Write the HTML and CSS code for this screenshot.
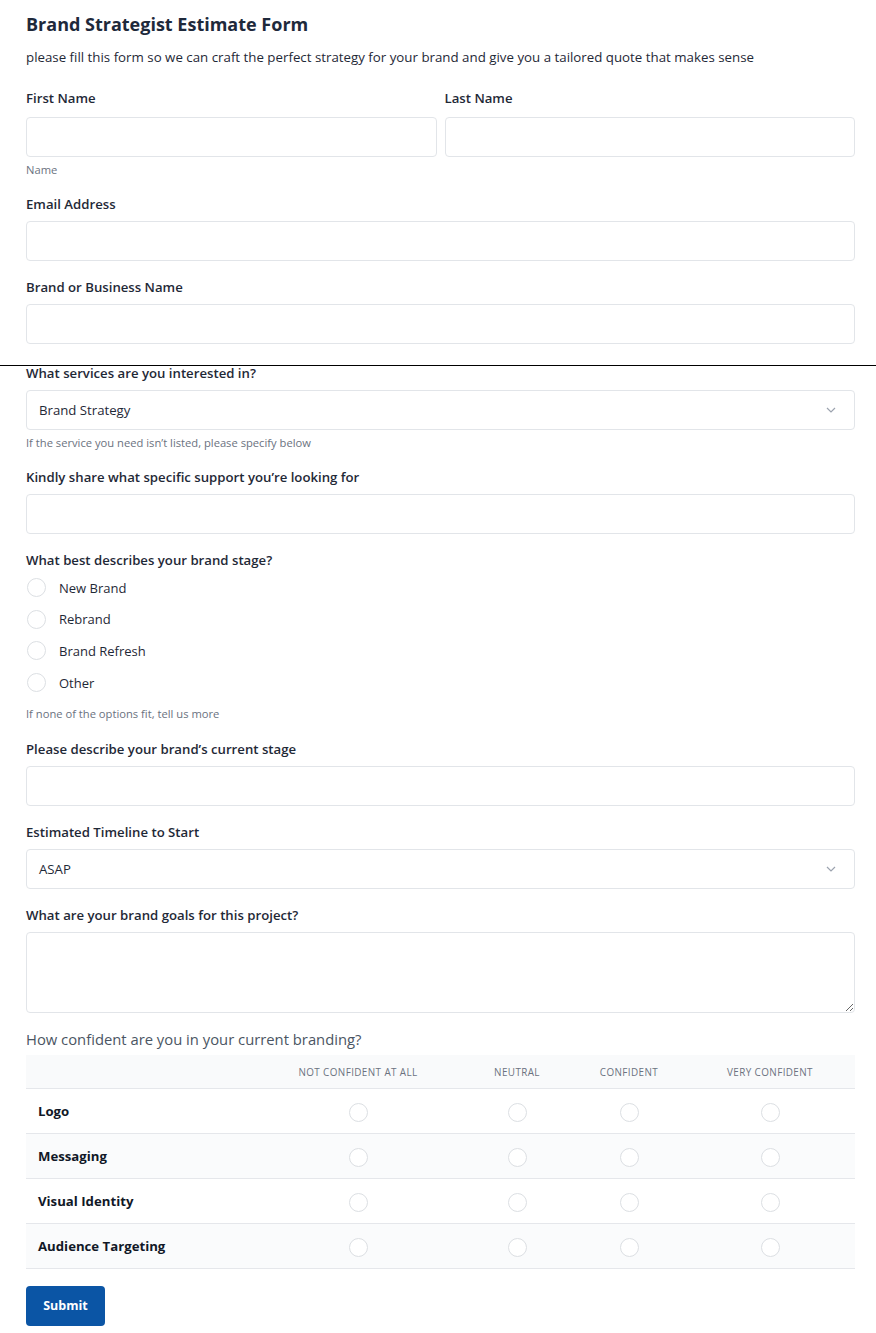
FILE: index.html
```html
<!DOCTYPE html>
<html lang="en">
<head>
<meta charset="utf-8">
<title>Brand Strategist Estimate Form</title>
<link rel="stylesheet" href="styles.css">
</head>
<body>
<form class="form">
  <h1 class="title">Brand Strategist Estimate Form</h1>
  <p class="desc">please fill this form so we can craft the perfect strategy for your brand and give you a tailored quote that makes sense</p>

  <div class="name-grid">
    <div class="field">
      <label class="label">First Name</label>
      <input class="input" type="text">
    </div>
    <div class="field">
      <label class="label">Last Name</label>
      <input class="input" type="text">
    </div>
  </div>
  <div class="helper helper-name">Name</div>

  <div class="field">
    <label class="label">Email Address</label>
    <input class="input" type="email">
  </div>

  <div class="field">
    <label class="label">Brand or Business Name</label>
    <input class="input" type="text">
  </div>

  <div class="rule"></div>

  <div class="field field-tight field-after-rule">
    <label class="label">What services are you interested in?</label>
    <div class="select">
      <span>Brand Strategy</span>
      <svg class="chev" width="10" height="6" viewBox="0 0 10 6"><path d="M1 1l4 4 4-4" fill="none" stroke="#9ca3af" stroke-width="1.2"/></svg>
    </div>
  </div>
  <div class="helper">If the service you need isn’t listed, please specify below</div>

  <div class="field">
    <label class="label">Kindly share what specific support you’re looking for</label>
    <input class="input" type="text">
  </div>

  <div class="field-radios">
    <div class="label">What best describes your brand stage?</div>
    <div class="radios">
      <label class="radio-row"><span class="circle"></span>New Brand</label>
      <label class="radio-row"><span class="circle"></span>Rebrand</label>
      <label class="radio-row"><span class="circle"></span>Brand Refresh</label>
      <label class="radio-row"><span class="circle"></span>Other</label>
    </div>
  </div>
  <div class="helper helper-radios">If none of the options fit, tell us more</div>

  <div class="field">
    <label class="label">Please describe your brand’s current stage</label>
    <input class="input" type="text">
  </div>

  <div class="field">
    <label class="label">Estimated Timeline to Start</label>
    <div class="select">
      <span>ASAP</span>
      <svg class="chev" width="10" height="6" viewBox="0 0 10 6"><path d="M1 1l4 4 4-4" fill="none" stroke="#9ca3af" stroke-width="1.2"/></svg>
    </div>
  </div>

  <div class="field">
    <label class="label">What are your brand goals for this project?</label>
    <textarea class="textarea"></textarea>
  </div>

  <div class="matrix-label">How confident are you in your current branding?</div>
  <table class="matrix">
    <colgroup>
      <col class="c1"><col class="c2"><col class="c3"><col class="c4"><col class="c5">
    </colgroup>
    <thead>
      <tr><th></th><th>NOT CONFIDENT AT ALL</th><th>NEUTRAL</th><th>CONFIDENT</th><th>VERY CONFIDENT</th></tr>
    </thead>
    <tbody>
      <tr><td class="row-label">Logo</td><td><span class="circle"></span></td><td><span class="circle"></span></td><td><span class="circle"></span></td><td><span class="circle"></span></td></tr>
      <tr class="alt"><td class="row-label">Messaging</td><td><span class="circle"></span></td><td><span class="circle"></span></td><td><span class="circle"></span></td><td><span class="circle"></span></td></tr>
      <tr><td class="row-label">Visual Identity</td><td><span class="circle"></span></td><td><span class="circle"></span></td><td><span class="circle"></span></td><td><span class="circle"></span></td></tr>
      <tr class="alt"><td class="row-label">Audience Targeting</td><td><span class="circle"></span></td><td><span class="circle"></span></td><td><span class="circle"></span></td><td><span class="circle"></span></td></tr>
    </tbody>
  </table>

  <button class="submit" type="button">Submit</button>
</form>
</body>
</html>
```

FILE: styles.css
```css
* { box-sizing: border-box; }
html, body { margin: 0; padding: 0; background: #fff; }
body {
  font-family: "Open Sans", "Noto Sans", "Liberation Sans", sans-serif;
  color: #1f2937;
}
.form {
  padding: 12px 21px 0 26px;
}
.title {
  margin: 0;
  font-size: 18px;
  line-height: 24px;
  font-weight: 700;
  color: #1e293b;
}
.desc {
  margin: 12px 0 0;
  font-size: 13.3px;
  line-height: 18px;
  color: #1f2937;
}
.name-grid {
  margin-top: 23px;
  display: grid;
  grid-template-columns: 1fr 1fr;
  column-gap: 8px;
}
.name-grid .field { margin-bottom: 0; }
.name-grid .label { margin-bottom: 10px; }
.field { margin-bottom: 17px; }
.field-tight { margin-bottom: 0; }
.label {
  display: block;
  font-size: 13.2px;
  line-height: 18px;
  font-weight: 600;
  color: #1f2937;
  margin-bottom: 8px;
}
.input, .select, .textarea {
  display: block;
  width: 100%;
  height: 40px;
  border: 1px solid #e2e5e9;
  border-radius: 4px;
  background: #fff;
  font: inherit;
}
.select {
  display: flex;
  align-items: center;
  justify-content: space-between;
  padding: 0 18px 0 12px;
  font-size: 13.2px;
  color: #1f2937;
}
.textarea {
  height: 81px;
  resize: vertical;
}
.helper {
  font-size: 11.2px;
  line-height: 14px;
  color: #6b7280;
  margin: 6px 0 18px;
}
.rule {
  height: 1px;
  background: #000;
  margin: 21px -21px 0 -26px;
}
.field-after-rule { margin-top: -2px; }
.field-radios .label { margin-bottom: 3px; }
.radios { display: flex; flex-direction: column; }
.radio-row {
  display: flex;
  align-items: center;
  height: 31.6px;
  font-size: 13px;
  color: #1f2937;
  gap: 13px;
  padding-left: 1px;
}
.circle {
  display: inline-block;
  width: 19px;
  height: 19px;
  border-radius: 50%;
  border: 1px solid #dcdfe3;
  background: #fff;
  flex: none;
}
.helper-radios { margin: 9px 0 19px; }
.matrix-label {
  margin-top: 17px;
  font-size: 14.8px;
  line-height: 18px;
  color: #4b5563;
}
.matrix {
  width: 100%;
  border-collapse: collapse;
  table-layout: fixed;
  margin-top: 7px;
}
.c1 { width: 229px; }
.c2 { width: 206px; }
.c3 { width: 112px; }
.c4 { width: 112px; }
.c5 { width: 170px; }
.matrix thead tr { background: #f9fafb; }
.matrix th {
  height: 33px;
  font-size: 9.9px;
  font-weight: 400;
  letter-spacing: 0.4px;
  color: #6b7280;
  text-align: center;
  border-bottom: 1px solid #e5e7eb;
  padding: 0;
}
.matrix td {
  height: 45px;
  text-align: center;
  border-bottom: 1px solid #e5e7eb;
  padding: 0;
  vertical-align: middle;
}
.matrix td .circle { vertical-align: middle; }
.matrix tr.alt { background: #fafbfc; }
.matrix td.row-label {
  text-align: left;
  padding-left: 12px;
  font-size: 13.2px;
  font-weight: 700;
  color: #111827;
}
.submit {
  display: block;
  margin-top: 17px;
  width: 79px;
  height: 40px;
  border: 0;
  border-radius: 4px;
  background: #0b55a5;
  color: #fff;
  font-family: inherit;
  font-size: 12.5px;
  font-weight: 700;
}
```
